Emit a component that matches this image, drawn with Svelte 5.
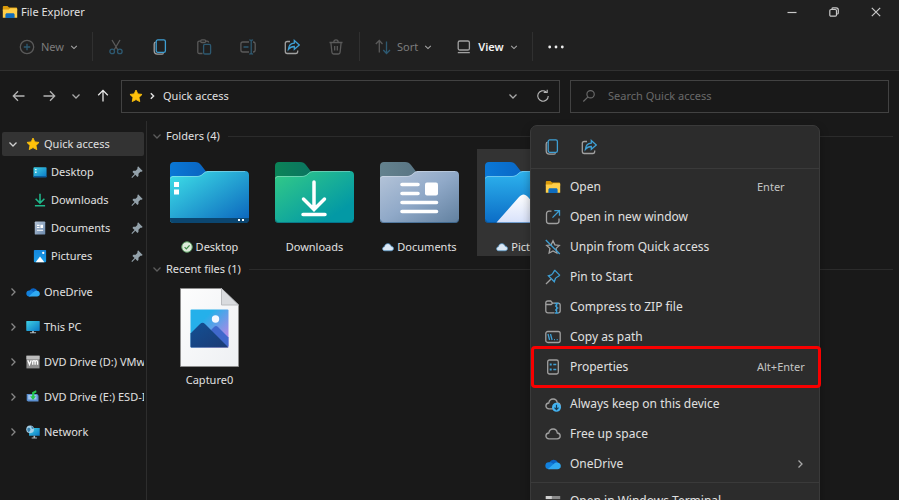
<script>
  const folders = [
    { name: 'Desktop', art: 'desktop', status: 'synced' },
    { name: 'Downloads', art: 'downloads', status: '' },
    { name: 'Documents', art: 'documents', status: 'cloud' },
    { name: 'Pictures', art: 'pictures', status: 'cloud', selected: true },
  ];

  const pinned = [
    { name: 'Desktop', icon: 'desktop' },
    { name: 'Downloads', icon: 'download' },
    { name: 'Documents', icon: 'document' },
    { name: 'Pictures', icon: 'picture' },
  ];

  const places = [
    { name: 'OneDrive', icon: 'onedrive' },
    { name: 'This PC', icon: 'pc' },
    { name: 'DVD Drive (D:) VMware Tools', icon: 'vm' },
    { name: 'DVD Drive (E:) ESD-ISO', icon: 'esd' },
    { name: 'Network', icon: 'network' },
  ];

  const menuGroups = [
    [
      { name: 'Open', icon: 'explorer', keys: 'Enter' },
      { name: 'Open in new window', icon: 'newwindow' },
      { name: 'Unpin from Quick access', icon: 'unpin' },
      { name: 'Pin to Start', icon: 'pinstart' },
      { name: 'Compress to ZIP file', icon: 'zip' },
      { name: 'Copy as path', icon: 'path' },
      { name: 'Properties', icon: 'properties', keys: 'Alt+Enter', marked: true },
    ],
    [
      { name: 'Always keep on this device', icon: 'keep' },
      { name: 'Free up space', icon: 'cloud' },
      { name: 'OneDrive', icon: 'onedrive', submenu: true },
    ],
    [{ name: 'Open in Windows Terminal', icon: 'terminal' }],
  ];

  const tools = [
    { name: 'Cut', icon: 'cut', off: true },
    { name: 'Copy', icon: 'copy' },
    { name: 'Paste', icon: 'paste', off: true },
    { name: 'Rename', icon: 'rename', off: true },
    { name: 'Share', icon: 'share' },
    { name: 'Delete', icon: 'trash', off: true },
  ];
</script>

{#snippet chevron(dir)}
  <svg class="chev" viewBox="0 0 10 10" width="10" height="10" aria-hidden="true">
    {#if dir === 'down'}
      <path d="M1.5 3.5 5 7l3.5-3.5" />
    {:else}
      <path d="M3.5 1.5 7 5 3.5 8.5" />
    {/if}
  </svg>
{/snippet}

{#snippet icon(name)}
  <svg class="icon" viewBox="0 0 16 16" width="16" height="16" aria-hidden="true">
    {#if name === 'explorer'}
      <path d="M.8 3.2c0-.7.5-1.2 1.200-1.200h3.400l1.700 1.600H14c.7 0 1.200.5 1.200 1.200v2H.8z" fill="#d99a0b" />
      <path d="M.8 5.600h6l1.400-1.300h6c.6 0 1 .4 1 1v8.500H.8z" fill="#ffcf4a" />
      <path d="M3.400 14v-3.200c0-.9.7-1.500 1.500-1.500h6.200c.9 0 1.500.7 1.500 1.500V14z" fill="#0f6cbd" />
    {:else if name === 'new'}
      <circle class="g" cx="8" cy="8" r="6.700" />
      <path class="b" d="M8 4.800v6.400M4.800 8h6.400" />
    {:else if name === 'cut'}
      <path class="g" d="M4 1 9.900 11M12 1 6.100 11" />
      <circle class="b" cx="4.200" cy="12.400" r="2.300" />
      <circle class="b" cx="11.800" cy="12.400" r="2.300" />
    {:else if name === 'copy'}
      <path class="g" d="M3.600 3.200C2.400 3.400 2.200 4.200 2.200 5v6.800c0 2 1.200 3.400 3.300 3.400h4.300c.9 0 1.400-.3 1.700-1" />
      <rect class="b" x="4.200" y=".9" width="9.200" height="12.400" rx="1.600" />
    {:else if name === 'paste'}
      <path class="g" d="M6.500 14.500H3.200c-.9 0-1.400-.6-1.400-1.400V3.600c0-.8.5-1.400 1.400-1.400h1.500m5 0h1.500c.9 0 1.400.6 1.400 1.300" />
      <rect class="g" x="4.700" y=".9" width="5" height="2.600" rx="1.200" />
      <rect class="b" x="7.600" y="5.400" width="7" height="9.600" rx="1.300" />
    {:else if name === 'rename'}
      <path class="g" d="M9 3H2.800C1.500 3 .9 3.800.9 5v6c0 1.200.7 2 1.900 2H9m4-10c1.500 0 2.200.8 2.200 2v6c0 1.200-.7 2-2.200 2" />
      <path class="b" d="M3.500 8h5M9.300.9c1.200 0 1.900.4 1.900 1.300v11.600c0 .9-.7 1.300-1.900 1.300M13.100.9c-1.200 0-1.900.4-1.900 1.300m0 11.600c0 .9.700 1.300 1.900 1.300" />
    {:else if name === 'share'}
      <path class="g" d="M6 2.500H3.200c-1.200 0-1.900.7-1.900 1.900v8.200c0 1.200.7 1.900 1.900 1.900h8.600c1.200 0 1.900-.7 1.900-1.900v-1" />
      <path class="b" d="M10.300 1.500v2.700C6.600 4.400 4.700 6.900 4.400 10.300c1.500-2 3.200-2.800 5.900-2.800v2.800l5-4.400z" />
    {:else if name === 'trash'}
      <path class="g" d="M1.500 3.500h13M5.800 3.300c0-1.500.8-2.400 2.200-2.400s2.200.9 2.200 2.400M2.900 3.700l1 9.600c.1 1 .7 1.700 1.700 1.700h4.800c1 0 1.600-.7 1.700-1.700l1-9.600M6.700 7v4.500M9.300 7v4.500" />
    {:else if name === 'sort'}
      <path class="g" d="M4.300 13.500v-12M.8 5l3.500-3.500L7.500 5" />
      <path class="b" d="M11.500 2.500v12M8.300 11l3.200 3.500L15 11" />
    {:else if name === 'view'}
      <rect class="g" x="2.200" y="2" width="11.200" height="9" rx="1.600" />
      <path class="g" d="M1.800 13.600h12" stroke-width="2" />
    {:else if name === 'more'}
      <circle cx="1.700" cy="8" r="1.400" fill="#eee" />
      <circle cx="8" cy="8" r="1.400" fill="#eee" />
      <circle cx="14.300" cy="8" r="1.400" fill="#eee" />
    {:else if name === 'back'}
      <path class="l" d="M13.500 8h-11M7 3.200 2.300 8 7 12.800" />
    {:else if name === 'forward'}
      <path class="l" d="M2.500 8h11M9 3.200 13.700 8 9 12.800" />
    {:else if name === 'up'}
      <path class="l" d="M8 13.500v-11M3.200 7.200 8 2.400l4.800 4.800" />
    {:else if name === 'refresh'}
      <path class="l" d="M14 8a6 6 0 1 1-2.500-4.900M8.800 3.800h4V.8" />
    {:else if name === 'search'}
      <circle class="g" cx="9.800" cy="6" r="4.200" />
      <path class="g" d="M6.600 9.200 1.500 14.300" />
    {:else if name === 'star'}
      <path d="m8 1.200 2.100 4.400 4.800.6-3.500 3.400.9 4.800L8 12.100l-4.300 2.300.9-4.800L1.100 6.200l4.800-.6z" fill="#ffc20a" stroke="#ffc20a" stroke-width="1" stroke-linejoin="round" />
    {:else if name === 'desktop'}
      <rect x=".5" y="2.500" width="15" height="11.500" rx="1" fill="url(#teal)" />
      <path d="M.5 12.500h15v.5c0 .6-.4 1-1 1h-13c-.6 0-1-.4-1-1z" fill="#0a5a9c" />
      <path d="M2.500 4.500H4V6H2.500zM2.500 7.500H4V9H2.500z" fill="#fff" />
    {:else if name === 'download'}
      <path d="M8 .8v10M3 6.600l5 4.900 5-4.900M2.200 14.500h11.600" fill="none" stroke="#1fb68a" stroke-width="1.800" />
    {:else if name === 'document'}
      <rect x="2" y=".5" width="12" height="15" rx="1" fill="url(#slate)" />
      <path d="M4.500 5h3M4.500 7.500h3M4.500 10.500h7" stroke="#fff" stroke-width="1.200" />
      <path d="M8.500 4.300h3V8h-3z" fill="#fff" />
    {:else if name === 'picture'}
      <rect x="1" y="1" width="14" height="14" rx="1" fill="url(#blue)" />
      <path d="m3 15 5-6.500L13 15z" fill="#fff" />
      <circle cx="11.700" cy="4.500" r="1.300" fill="#fff" />
    {:else if name === 'onedrive'}
      <path d="M4.400 6.200A4.700 4.700 0 0 1 12.900 6.500L7 10z" fill="#0a64c4" />
      <path d="M3.700 13.200A3.400 3.400 0 0 1 4 6.200c1.700-.3 3 .4 4.300 1.500l3 4z" fill="#1280dc" />
      <path d="M3 13 8.600 8c1.500-1.200 2.600-1.600 4.100-1.400 2 .3 3.100 1.700 3.100 3.400 0 1.900-1.400 3.200-3.200 3.200H4z" fill="#30aaf2" />
    {:else if name === 'pc'}
      <rect x=".3" y="1" width="15.400" height="11.500" rx=".8" fill="url(#teal)" />
      <path d="M7 12.500h2v1.700H7zM4.500 14h7v1.200h-7z" fill="#a9b5bc" />
    {:else if name === 'vm'}
      <rect x=".5" y=".8" width="15" height="14.500" fill="#8e8e8e" />
      <path d="M.5.800h15v4H.5z" fill="#bcbcbc" />
      <path d="M2 6l2 4.800L6 6M7.700 11V6.300M7.700 8c.2-2 2.700-2 2.700 0v3m0-3c.2-2 2.800-2 2.800 0v3" fill="none" stroke="#fff" stroke-width="1.500" />
    {:else if name === 'esd'}
      <path d="M.8 4.500h12l1.500 2v6.500H2.300L.8 12z" fill="#5b8fd0" />
      <path d="M2.500 5.800h9.500v5H2.500z" fill="#9fc3ee" />
      <path d="M11.500.3 7 2.700v4.500H4.700L8 11.500l3.300-4.300H9.500V4L12 2.500z" fill="#25c850" />
    {:else if name === 'network'}
      <path d="M3.500 3.500h12.200v8.900H3.500z" fill="url(#teal)" />
      <path d="M8.600 12.400h1.800v2H8.600zM6.500 14.200h6v1.200h-6z" fill="#a9b5bc" />
      <circle cx="4.700" cy="4.900" r="4.400" fill="#a5d0e8" />
      <path d="M2 3.500c1.500-.8 2.500 0 3 1S4 8 3 8 .8 5 2 3.500zM6 1.200c1.500.5 2.600 2 2.700 3.700L6.500 4z" fill="#3a82ad" />
    {:else if name === 'newwindow'}
      <path class="g" d="M6.500 2.200H4c-1.600 0-2.500.9-2.500 2.500V12c0 1.600.9 2.500 2.500 2.500h7.500c1.600 0 2.500-.9 2.500-2.500V9.500" />
      <path class="b" d="M9.300 1.600h5.200v5.200M14.300 1.800 7.500 8.600" />
    {:else if name === 'unpin'}
      <path class="g" d="m8 1.800 1.900 4 4.400.6-3.200 3 .8 4.700L8 12l-3.900 2.100.8-4.700-3.200-3 4.400-.6z" />
      <path class="b" d="m.8 1 14 14" />
    {:else if name === 'pinstart'}
      <path class="b" d="m9.900 1.400 4.700 4.700c-.5 1.600-3 1.600-4.200 3.400L9.300 12.700 3.400 6.800l3-1C8.400 4.700 8.500 2.200 9.900 1.400z" />
      <path class="g" d="M5.800 10.200 1 15" />
    {:else if name === 'zip'}
      <path class="g" d="M9.500 13.800H2.900c-1.300 0-2.100-.8-2.100-2.100V4c0-1.300.8-2 2.100-2h2.800l1.900 2.200h5.500c1.300 0 2.100.7 2.100 2v5.600c0 1.200-.8 2-2 2M.9 5.500h5.300l1.400-1.300" />
      <path class="b" d="M9.700 4.500h3.800M11.600 4.500v9.700M10 7h1.500M11.800 9h1.500M10 11h1.500M9.900 14h3.400" />
    {:else if name === 'path'}
      <rect class="g" x=".8" y="2.500" width="14.400" height="11" rx="2" />
      <path class="b" d="m3 5 1.600 6M5.500 5l1.600 6M9 10.700h1M11.700 10.700h1" />
    {:else if name === 'properties'}
      <rect class="g" x="2.700" y="1" width="10.600" height="14" rx="1.800" />
      <path class="b" d="M8.300 5.500h3M8.300 10.500h3" />
      <path d="M4.700 4.500h2v2h-2zM4.700 9.500h2v2h-2z" fill="#3e9fd4" />
    {:else if name === 'cloud' || name === 'keep'}
      <path class="g" d="M4 12.800C2.200 12.800.9 11.600.9 10s1.200-2.900 2.900-3C4.200 4.500 5.900 3 8.100 3s3.900 1.500 4.200 4c1.700.1 2.900 1.300 2.900 3s-1.300 2.800-3.100 2.800z" />
      {#if name === 'keep'}
        <circle cx="11.500" cy="11.300" r="4.500" fill="#43b2f0" />
        <path d="M11.500 8.800v4.600M9.500 11.600l2 2 2-2" fill="none" stroke="#153a52" stroke-width="1.200" />
      {/if}
    {:else if name === 'terminal'}
      <path d="M.8 3h14.400v11H.8z" fill="#3a3a3a" />
      <path d="M.8 3h14.400v3H.8z" fill="#8a8a8a" />
      <path d="M.8 3h6v3h-6z" fill="#d0d0d0" />
    {:else if name === 'pin'}
      <path d="m9.200 1.500 5.300 5.300-1.300.9-1.300.1-2.200 2.200v2.600l-1.300 1-2.300-2.400-3.600 3.600-.9-.9 3.600-3.600L2.800 8l1-1.300h2.600l2-2 .1-1.800z" fill="#93a1aa" />
    {:else if name === 'synced'}
      <circle cx="8" cy="8" r="7" fill="#dcebd9" stroke="#5c9e63" stroke-width="1.300" />
      <path d="m4.800 8.200 2.300 2.300 4.300-4.600" fill="none" stroke="#3f8a48" stroke-width="1.700" />
    {:else if name === 'online'}
      <path d="M3.800 13C1.900 13 .8 12 .8 10.300c0-1.500 1-2.500 2.500-2.700C3.700 5 5.500 3.500 7.800 3.500s3.900 1.400 4.300 3.600c2 .1 3.200 1.200 3.200 2.900S14 13 12.200 13z" fill="#dce8f4" stroke="#5c9fd2" stroke-width="1" />
    {/if}
  </svg>
{/snippet}

{#snippet folder(art)}
  <svg class="folder" viewBox="0 0 79 62" width="79" height="62" aria-hidden="true">
    <path d="M0 18V4c0-2.500 1.500-4 4-4h21c3 0 4.500 1 6 3l5 6.500V18z" fill="url(#{art}-back)" />
    <path d="M0 58V17c0-2 1-3 3-3h23c3 0 5-.5 7-2.500l1.500-1.200C35.500 9.300 37 9 39 9h36c2.500 0 4 1.500 4 4v44c0 2.500-1.500 4-4 4H4c-2.500 0-4-1-4-3z" fill="url(#{art}-front)" />
    <path d="M.5 57.500c.4 2 1.500 3 3.500 3h71c2 0 3.300-1 3.500-3" fill="none" stroke="#053b6b" stroke-opacity=".4" />
    <path d="M.5 16.500c.3-1.300 1.100-2 2.500-2h23c3 0 5-.5 7-2.500 2-1.800 3-2.500 6-2.500h36" fill="none" stroke="#fff" stroke-opacity=".3" />
    {#if art === 'desktop'}
      <path d="M0 56h79v1c0 2.500-1.500 4-4 4H4c-2.500 0-4-1.500-4-4z" fill="#0b4670" />
      <path d="M4 20h5v5H4zM4 27.500h5v5H4zM68 57h2v2h-2zM72 57h2v2h-2z" fill="#fff" />
    {:else if art === 'downloads'}
      <path d="M39 20v27M28.500 37 39 47.500 49.500 37M28 52.500h22" fill="none" stroke="#fff" stroke-width="3.500" stroke-linecap="round" />
    {:else if art === 'documents'}
      <path d="M22 22.500h16M22 31.500h16M22 40.500h34.500M22 49.500h34.500" stroke="#fff" stroke-width="3.600" stroke-linecap="round" />
      <rect x="45" y="20.500" width="13" height="13" rx="2" fill="#fff" />
    {:else}
      <path d="M11.500 60.500 34 35c3-3.500 6-3.500 9 0l22 25.500z" fill="url(#snow)" />
    {/if}
  </svg>
{/snippet}

<svg class="defs" width="0" height="0" aria-hidden="true">
  <defs>
    <linearGradient id="teal" x1="0" y1="0" x2="1" y2="1"><stop stop-color="#3fd0e4" /><stop offset="1" stop-color="#0a78c6" /></linearGradient>
    <linearGradient id="slate" x1="0" y1="0" x2="1" y2="1"><stop stop-color="#b6c4d6" /><stop offset="1" stop-color="#6b8aae" /></linearGradient>
    <linearGradient id="blue" x1="0" y1="0" x2="0" y2="1"><stop stop-color="#1486dc" /><stop offset="1" stop-color="#1a9de8" /></linearGradient>
    <linearGradient id="snow" x1="0" y1="0" x2="0" y2="1"><stop stop-color="#fff" /><stop offset="1" stop-color="#d8e2fb" /></linearGradient>
    <linearGradient id="desktop-back"><stop stop-color="#0a78d6" /><stop offset="1" stop-color="#0a64c0" /></linearGradient>
    <linearGradient id="desktop-front" x1="0" y1="0" x2="1" y2="1"><stop stop-color="#3fe2e8" /><stop offset="1" stop-color="#0a62bc" /></linearGradient>
    <linearGradient id="downloads-back"><stop stop-color="#0b8458" /><stop offset="1" stop-color="#0b7460" /></linearGradient>
    <linearGradient id="downloads-front" x1="0" y1="0" x2="1" y2="1"><stop stop-color="#34cb86" /><stop offset=".8" stop-color="#0399a5" /></linearGradient>
    <linearGradient id="documents-back"><stop stop-color="#64828e" /><stop offset="1" stop-color="#597584" /></linearGradient>
    <linearGradient id="documents-front" x1="0" y1="0" x2="1" y2="1"><stop stop-color="#b7c6da" /><stop offset=".5" stop-color="#90a9c8" /><stop offset="1" stop-color="#61809f" /></linearGradient>
    <linearGradient id="pictures-back"><stop stop-color="#0a78d6" /><stop offset="1" stop-color="#0a68c6" /></linearGradient>
    <linearGradient id="pictures-front" x1="0" y1="0" x2="0" y2="1"><stop stop-color="#2eb4ee" /><stop offset="1" stop-color="#0b6cc6" /></linearGradient>
    <linearGradient id="sky" x1="0" y1="0" x2="1" y2="1"><stop offset=".3" stop-color="#25b0ea" /><stop offset=".8" stop-color="#a58be6" /></linearGradient>
    <linearGradient id="hill" x1="0" y1="0" x2="1" y2="1"><stop stop-color="#125094" /><stop offset="1" stop-color="#1c3a74" /></linearGradient>
    <linearGradient id="sheet" x1="0" y1="0" x2="1" y2="1"><stop stop-color="#fdfdfd" /><stop offset="1" stop-color="#eef0f3" /></linearGradient>
  </defs>
</svg>

<div class="window">
  <header class="chrome">
    <div class="titlebar">
      {@render icon('explorer')}
      <h1>File Explorer</h1>
      <div class="controls">
        <button aria-label="Minimize"><svg width="10" height="10" viewBox="0 0 10 10"><path d="M.5 5.500h9" /></svg></button>
        <button aria-label="Restore"><svg width="10" height="10" viewBox="0 0 10 10"><rect x=".8" y="2.500" width="6.700" height="6.700" rx="1.200" /><path d="M2.800 1.800C3 1 3.500.8 4.200.8h3C8.500.8 9.300 1.500 9.300 3v2.800c0 .8-.4 1.200-1 1.500" /></svg></button>
        <button aria-label="Close"><svg width="10" height="10" viewBox="0 0 10 10"><path d="m.8.8 8.400 8.400M9.200.8.8 9.200" /></svg></button>
      </div>
    </div>
    <div class="toolbar">
      <button class="labelled first off">{@render icon('new')}<span>New</span>{@render chevron('down')}</button>
      <span class="divider"></span>
      {#each tools as tool}
        <button class="tool" class:off={tool.off} aria-label={tool.name}>{@render icon(tool.icon)}</button>
      {/each}
      <span class="divider"></span>
      <button class="labelled off">{@render icon('sort')}<span>Sort</span>{@render chevron('down')}</button>
      <button class="labelled view">{@render icon('view')}<span>View</span>{@render chevron('down')}</button>
      <span class="divider"></span>
      <button class="tool" aria-label="See more">{@render icon('more')}</button>
    </div>
  </header>

  <nav class="navbar" aria-label="Navigation">
    <div class="arrows">
      <button aria-label="Back">{@render icon('back')}</button>
      <button aria-label="Forward">{@render icon('forward')}</button>
      <button class="narrow" aria-label="Recent locations">{@render chevron('down')}</button>
      <button class="bright" aria-label="Up">{@render icon('up')}</button>
    </div>
    <div class="address">
      {@render icon('star')}
      {@render chevron('right')}
      <button class="crumb">Quick access</button>
      <button class="small" aria-label="Previous locations">{@render chevron('down')}</button>
      <button class="small" aria-label="Refresh">{@render icon('refresh')}</button>
    </div>
    <label class="search">
      {@render icon('search')}
      <input type="text" placeholder="Search Quick access" aria-label="Search Quick access" />
    </label>
  </nav>

  <div class="body">
    <aside>
      <button class="row active">{@render chevron('down')}{@render icon('star')}<span>Quick access</span></button>
      {#each pinned as item}
        <button class="row child">{@render icon(item.icon)}<span>{item.name}</span>{@render icon('pin')}</button>
      {/each}
      <div class="places">
        {#each places as item}
          <button class="row tall">{@render chevron('right')}{@render icon(item.icon)}<span>{item.name}</span></button>
        {/each}
      </div>
    </aside>

    <main>
      <section>
        <h2>{@render chevron('down')}<span>Folders (4)</span></h2>
        <div class="tiles">
          {#each folders as item}
            <button class="tile" class:selected={item.selected}>
              {@render folder(item.art)}
              <span class="label">
                {#if item.status}{@render icon(item.status === 'cloud' ? 'online' : 'synced')}{/if}{item.name}
              </span>
            </button>
          {/each}
        </div>
      </section>
      <section>
        <h2>{@render chevron('down')}<span>Recent files (1)</span></h2>
        <div class="tiles">
          <button class="tile file">
            <svg viewBox="0 0 59 79" width="59" height="79" aria-hidden="true">
              <path d="M.5.5h41L58.500 17v61.500H.5z" fill="url(#sheet)" stroke="#8d8d8d" />
              <path d="M41.500.5V17h17z" fill="#d9dbde" stroke="#b9bbbe" />
              <rect x="10.500" y="21.500" width="38" height="38" rx="1" fill="url(#sky)" />
              <path d="m31 42 3-3c1.300-1.200 2.700-1.200 4 0l10.500 10.500v9H40z" fill="#4068cc" />
              <path d="M10.500 45.500 20 36c1.700-1.600 3.300-1.600 5 0l23.500 23.500h-37c-.7 0-1-.3-1-1z" fill="url(#hill)" />
              <circle cx="35.500" cy="31" r="3.700" fill="#f4f8ff" />
            </svg>
            <span class="label">Capture0</span>
          </button>
        </div>
      </section>
    </main>
  </div>

  <div class="menu" role="menu">
    <div class="quick">
      <button aria-label="Copy">{@render icon('copy')}</button>
      <button aria-label="Share">{@render icon('share')}</button>
    </div>
    {#each menuGroups as group}
      <div class="group">
        {#each group as item}
          <button class="item" class:marked={item.marked} role="menuitem">
            {@render icon(item.icon)}
            <span>{item.name}</span>
            {#if item.keys}<kbd>{item.keys}</kbd>{/if}
            {#if item.submenu}{@render chevron('right')}{/if}
          </button>
        {/each}
      </div>
    {/each}
  </div>
</div>

<style>
  :global(body) {
    margin: 0;
    background: #191919;
  }

  .window {
    position: relative;
    display: flex;
    flex-direction: column;
    height: 100vh;
    overflow: hidden;
    background: #191919;
    color: #e0e0e0;
    font: 11px/16px 'Noto Sans', 'Open Sans', sans-serif;
  }

  .defs {
    position: absolute;
  }

  button {
    display: flex;
    align-items: center;
    padding: 0;
    border: 0;
    background: none;
    color: inherit;
    font: inherit;
    white-space: nowrap;
  }

  svg {
    display: block;
    flex: none;
  }

  .chev {
    fill: none;
    stroke: #a8a8a8;
    stroke-width: 1.3;
  }

  .g,
  .b,
  .l {
    fill: none;
    stroke: #a0a0a0;
    stroke-width: 1.3;
  }

  .b {
    stroke: #3e9fd4;
  }

  .l {
    stroke: #b4b4b4;
  }

  .chrome {
    flex: none;
    border-bottom: 1px solid #303030;
    background: #202020;
  }

  .titlebar {
    display: flex;
    align-items: center;
    gap: 3px;
    height: 23px;
    padding-left: 2px;
  }

  h1 {
    flex: 1;
    margin: 0;
    font-size: 11px;
    font-weight: 400;
  }

  .controls {
    display: flex;
    padding-right: 2px;
  }

  .controls button {
    justify-content: center;
    width: 42px;
    height: 23px;
  }

  .controls svg {
    fill: none;
    stroke: #c8c8c8;
    stroke-width: 1.2;
  }

  .toolbar {
    display: flex;
    align-items: center;
    height: 47px;
  }

  .toolbar .chev {
    width: 8px;
    height: 8px;
  }

  .divider {
    width: 1px;
    height: 29px;
    margin: 0 1px;
    background: #303030;
  }

  .tool {
    justify-content: center;
    width: 44px;
    height: 32px;
  }

  .labelled {
    gap: 6px;
    padding-left: 14px;
    height: 32px;
  }

  .labelled.first {
    padding: 0 13px 0 19px;
  }

  .labelled.off {
    color: #7c7c7c;
  }

  .labelled.view {
    padding: 0 13px 0 24px;
    color: #f2f2f2;
    font-weight: 600;
  }

  .off .icon {
    opacity: 0.45;
  }

  .navbar {
    display: flex;
    flex: none;
    align-items: center;
    height: 50px;
    padding-right: 10px;
  }

  .arrows {
    display: flex;
    flex: none;
    padding: 0 3px 0 4px;
  }

  .arrows button {
    justify-content: center;
    width: 30px;
    height: 30px;
  }

  .arrows button.narrow {
    width: 24px;
  }

  .bright .l {
    stroke: #e8e8e8;
  }

  .address,
  .search {
    display: flex;
    align-items: center;
    box-sizing: border-box;
    height: 33px;
    border: 1px solid #424242;
  }

  .navbar .address .icon,
  .search .icon {
    width: 14px;
    height: 14px;
  }

  .address {
    flex: 13 1 0;
    gap: 5px;
    padding: 0 4px 0 7px;
  }

  .address > .chev {
    width: 8px;
    height: 8px;
    stroke: #e0e0e0;
    stroke-width: 1.8;
  }

  .crumb {
    flex: 1;
    margin-left: 2px;
  }

  .small {
    justify-content: center;
    width: 25px;
    height: 24px;
  }

  .search {
    flex: 9 1 0;
    gap: 12px;
    margin-left: 10px;
    padding: 0 11px;
  }

  .search .icon {
    opacity: 0.6;
  }

  input {
    flex: 1;
    min-width: 0;
    padding: 0;
    border: 0;
    outline: 0;
    background: none;
    color: inherit;
    font: inherit;
  }

  input::placeholder {
    color: #6a6a6a;
    opacity: 1;
  }

  .body {
    display: flex;
    flex: 1;
    min-height: 0;
  }

  aside {
    display: flex;
    flex: none;
    flex-direction: column;
    gap: 4px;
    box-sizing: border-box;
    width: 147px;
    padding: 11px 2px 0 2px;
    border-right: 1px solid #2d2d2d;
  }

  .row {
    gap: 4px;
    width: 100%;
    height: 24px;
    padding-left: 6px;
    overflow: hidden;
    border-radius: 2px;
  }

  .row .icon {
    width: 14px;
    height: 14px;
  }

  .row .chev {
    margin-right: 4px;
  }

  .active {
    background: #333;
  }

  .active .chev {
    stroke: #d0d0d0;
  }

  .child {
    padding: 0 0 0 31px;
  }

  .child span {
    flex: 1;
    text-align: left;
  }

  .places {
    display: flex;
    flex-direction: column;
    gap: 4px;
    padding-top: 4px;
  }

  .tall {
    height: 31px;
  }

  .tall .chev {
    stroke: #888;
  }

  main {
    flex: 1;
    min-width: 0;
    padding: 6px 6px 0 5px;
  }

  h2 {
    display: flex;
    align-items: center;
    gap: 4px;
    height: 18px;
    margin: 0;
    font-size: 11px;
    font-weight: 400;
  }

  h2::after {
    content: '';
    flex: 1;
    height: 1px;
    margin-left: 4px;
    background: #2b2b2b;
  }

  h2 .chev {
    stroke: #5c5c5c;
  }

  .tiles {
    display: flex;
    gap: 10px;
    padding: 4px 0 4px 10px;
  }

  .tile {
    flex: none;
    flex-direction: column;
    justify-content: space-between;
    box-sizing: border-box;
    width: 95px;
    height: 107px;
    padding: 13px 0 1px;
  }

  .file {
    padding-top: 6px;
  }

  .selected {
    background: #333;
  }

  .label {
    display: flex;
    align-items: center;
    gap: 3px;
  }

  .label .icon {
    width: 12px;
    height: 12px;
  }

  .menu {
    position: absolute;
    top: 125px;
    right: 79px;
    box-sizing: border-box;
    width: 290px;
    border: 1px solid #3a3a3a;
    border-radius: 7px;
    background: #2c2c2c;
    box-shadow: 0 4px 10px rgba(0, 0, 0, 0.3);
    font-size: 12px;
  }

  .quick {
    display: flex;
    height: 42px;
    padding-left: 2px;
  }

  .quick button {
    justify-content: center;
    width: 37px;
  }

  .group {
    padding: 3px 0;
    border-top: 1px solid #3a3a3a;
  }

  .item {
    position: relative;
    gap: 9px;
    width: 100%;
    height: 30px;
    padding: 0 14px 0 14px;
  }

  .item span {
    flex: 1;
    text-align: left;
  }

  kbd {
    min-width: 48px;
    color: #c4c4c4;
    font: inherit;
    font-size: 11px;
    text-align: left;
  }

  .marked::after {
    content: '';
    position: absolute;
    inset: -6px -2px -6px 0;
    border: 3px solid #f80000;
    border-radius: 4px;
  }
</style>
